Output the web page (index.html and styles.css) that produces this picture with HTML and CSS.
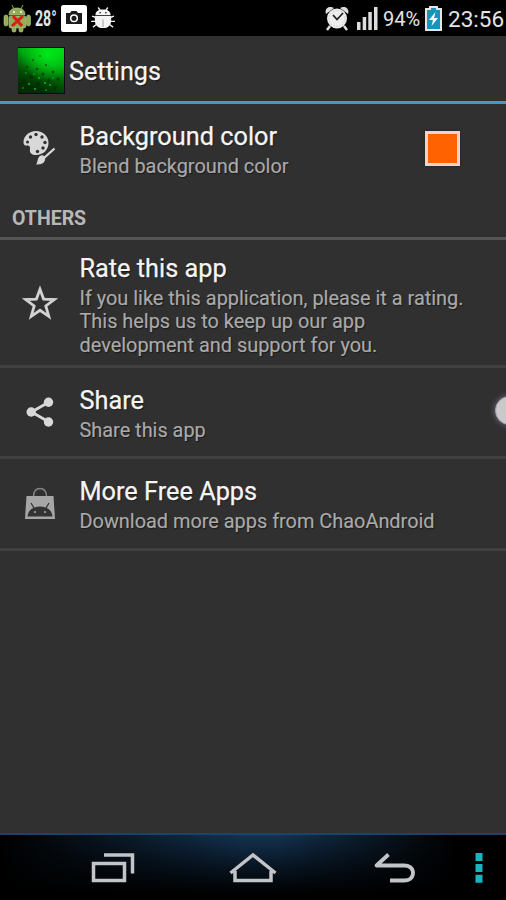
FILE: index.html
```html
<!DOCTYPE html>
<html lang="en">
<head>
<meta charset="utf-8">
<title>Settings</title>
<link rel="stylesheet" href="styles.css">
</head>
<body>
<div class="screen">
  <div class="status">
    <svg class="android" width="28" height="30" viewBox="0 0 28 30">
      <g fill="#91ad58" stroke="#b5c591" stroke-width=".6"><path d="M6 12C6 7 9 5 14 5s8 2 8 7z"/><rect x="6" y="13" width="17" height="12" rx="2"/><rect x="1" y="12" width="4" height="11" rx="2"/><rect x="23.500" y="12" width="4" height="11" rx="2"/><rect x="9" y="24" width="4" height="5" rx="1.5"/><rect x="16" y="24" width="4" height="5" rx="1.5"/></g>
      <path d="M9 2l2 4M20 2l-2 4" stroke="#91ad58"/><circle cx="11" cy="9" r="1" fill="#fff"/><circle cx="18" cy="9" r="1" fill="#fff"/>
      <path d="M10 13l9 10M20 13L9 23" stroke="#d71d16" stroke-width="3"/>
    </svg>
    <span class="temp">28°</span>
    <svg class="camera" width="26" height="27" viewBox="0 0 26 27"><rect width="26" height="27" rx="2.5" fill="#fff"/><path d="M5 8h4l1.500-2h5L17 8h4v11H5z" fill="#1b1b1b"/><circle cx="13" cy="13.200" r="3.300" fill="none" stroke="#fff" stroke-width="1.500"/></svg>
    <svg class="bug" width="24" height="22" viewBox="0 0 25 23"><g fill="#f4f4f4"><path d="M4.500 8.500c0-4 3-6 8-6s8 2 8 6z"/><path d="M4 9.500h17V14c0 5-3 8-8.500 8S4 19 4 14z"/></g><path d="M7.500.5l2 3M17.500.5l-2 3M5 11L1 9.500M5 15H0M6 18l-4 3M20 11l4-1.500M20 15h5M19 18l4 3" stroke="#eee" stroke-width="1.500"/><path d="M12.500 13v8" stroke="#999"/><circle cx="9.500" cy="6" r=".8"/><circle cx="15.500" cy="6" r=".8"/></svg>
    <span class="spacer"></span>
    <svg class="alarm" width="24" height="25" viewBox="0 0 24 25"><path d="M5 20l-3 4M19 20l3 4" stroke="#ddd" stroke-width="2.500"/><path d="M1 8C-1 3 4-1 9 2zM23 8c2-5-3-9-8-6z" fill="#ddd"/><circle cx="12" cy="12.500" r="10" fill="#eee"/><circle cx="12" cy="12.500" r="8" fill="none" stroke="#aaa" stroke-width=".8" stroke-dasharray="1 2"/><path d="M8 9l4 4.500L18 7" fill="none" stroke="#222" stroke-width="1.800"/></svg>
    <svg class="signal" width="21" height="23" viewBox="0 0 21 23" fill="#ddd"><path d="M0 15h3.500v8H0zM5.700 10h3.500v13H5.700zM11.300 5h3.500v18h-3.500zM17 0h3.500v23H17z"/></svg>
    <span class="percent">94%</span>
    <svg class="battery" width="17" height="25" viewBox="0 0 17 25"><path d="M5 1h7v2h4v21H1V3h4z" fill="#1595be" stroke="#e6e6e6" stroke-width="2"/><path d="M10.500 6L4 14h4l-1.500 6L13 12H9z" fill="#fff"/></svg>
    <span class="clock">23:56</span>
  </div>
  <div class="appbar">
    <svg class="appicon" width="47" height="47" viewBox="0 0 47 47">
      <defs><linearGradient id="g" x1="1" y1="0" x2=".6" y2="1"><stop offset="0" stop-color="#00d414"/><stop offset=".4" stop-color="#009e0b"/><stop offset=".75" stop-color="#014f05"/><stop offset="1" stop-color="#002c02"/></linearGradient><radialGradient id="r" cx=".65" cy=".15" r=".6"><stop offset="0" stop-color="#00f51d" stop-opacity=".8"/><stop offset="1" stop-color="#00f51d" stop-opacity="0"/></radialGradient></defs>
      <rect width="47" height="47" fill="#16051b"/><rect y="1" width="46" height="45" fill="url(#g)"/><rect y="1" width="46" height="45" fill="url(#r)"/>
      <g fill="#012c03" opacity=".7"><circle cx="15" cy="13" r="1"/><circle cx="22" cy="9" r=".8"/><circle cx="9" cy="20" r="1.200"/><circle cx="19" cy="22" r="1.300"/><circle cx="28" cy="18" r="1"/><circle cx="25" cy="27" r="1.500"/><circle cx="35" cy="25" r="1.200"/><circle cx="13" cy="30" r="2"/><circle cx="40" cy="32" r="1.500"/><circle cx="31" cy="33" r="1.500"/><circle cx="6" cy="34" r="2"/><circle cx="20" cy="37" r="2"/><circle cx="37" cy="41" r="2"/></g>
      <g fill="#12b82a"><circle cx="8" cy="26" r=".8"/><circle cx="16" cy="27" r=".8"/><circle cx="21" cy="31" r=".9"/><circle cx="11" cy="37" r="1"/><circle cx="27" cy="36" r="1"/><circle cx="32" cy="38" r=".9"/><circle cx="17" cy="42" r="1"/><circle cx="28" cy="43" r=".8"/><circle cx="35" cy="31" r=".8"/><circle cx="5" cy="41" r=".8"/></g>
    </svg>
    <h1>Settings</h1>
  </div>
  <div class="item first">
    <svg class="icon" width="36" height="36" viewBox="0 0 36 36"><path d="M14 1C7 1 1.500 6 1.500 12c0 3 1.500 4 3.500 3.500 2-.5 3.500 1 3 3.500-.8 4 2 6 6 6 7 0 12.500-5 12.500-12S21 1 14 1z" fill="#d8d8d8"/><g fill="#303030"><circle cx="14" cy="4.500" r="1.700"/><circle cx="20" cy="7" r="1.700"/><circle cx="23" cy="12.500" r="1.700"/><circle cx="21" cy="18" r="1.700"/><circle cx="15.500" cy="21.500" r="1.700"/><circle cx="8.500" cy="7" r="1.700"/><circle cx="5.500" cy="12" r="1.500"/></g><path d="M32 18.500L22.500 28" stroke="#303030" stroke-width="5"/><path d="M32.500 18.500L22 28" stroke="#d8d8d8" stroke-width="2.300"/><path d="M18 26c3-2 6 1 5 4-1 4-5 4.500-9 4.500 2-2 1-6.500 4-8.500z" fill="#d8d8d8"/></svg>
    <div class="text"><h2>Background color</h2><p>Blend background color</p></div>
    <span class="swatch"></span>
  </div>
  <h3>OTHERS</h3>
  <div class="item rate">
    <svg class="icon" width="36" height="36" viewBox="0 0 36 36"><path d="M18 4.300l3.600 9.800 10.700.4-8.500 6.500 3 10.300-8.800-6-8.800 6 3-10.300-8.500-6.500 10.700-.4z" fill="none" stroke="#d2d2d2" stroke-width="2.800"/></svg>
    <div class="text"><h2>Rate this app</h2><p>If you like this application, please it a rating.<br>This helps us to keep up our app<br>development and support for you.</p></div>
  </div>
  <div class="item share">
    <svg class="icon" width="36" height="36" viewBox="0 0 36 36"><path d="M27 8L9.500 18 27 28" fill="none" stroke="#d8d8d8" stroke-width="2.800"/><g fill="#d8d8d8"><circle cx="26.500" cy="8.300" r="4.700"/><circle cx="9.200" cy="18" r="4.700"/><circle cx="26.500" cy="28" r="4.700"/></g></svg>
    <div class="text"><h2>Share</h2><p>Share this app</p></div>
    <span class="knob"></span>
  </div>
  <div class="item more">
    <svg class="icon" width="36" height="36" viewBox="0 0 36 36"><path d="M11.500 11C11.500 5 14 2.500 18 2.500S24.500 5 24.500 11" fill="none" stroke="#858585" stroke-width="1.400"/><path d="M4.500 10h27l1.500 23H3z" fill="#a6a6a6"/><path d="M5.500 30.500C6 24 11 20.500 18 20.500S30 24 30.500 30.500z" fill="#333"/><path d="M9 17l3 5M27 17l-3 5" stroke="#333" stroke-width="1.300"/><circle cx="13" cy="26" r="1" fill="#aaa"/><circle cx="23" cy="26" r="1" fill="#aaa"/></svg>
    <div class="text"><h2>More Free Apps</h2><p>Download more apps from ChaoAndroid</p></div>
  </div>
  <div class="nav">
    <svg class="recent" width="44" height="32" viewBox="0 0 44 32"><path d="M13 3h28.500v18.500M2.500 11.500h31v17h-31z" fill="none" stroke="#c2c4c8" stroke-width="3.500"/></svg>
    <svg class="home" width="50" height="32" viewBox="0 0 50 32"><path d="M2.500 21L25 3l22.500 18M7 19v9.500h36V19" fill="none" stroke="#c2c4c8" stroke-width="3.500"/></svg>
    <svg class="back" width="44" height="32" viewBox="0 0 44 32"><path d="M16.500 2.500L4.500 13.500H32c5 0 9 2.500 9 7.500s-4 7.500-9 7.500H18" fill="none" stroke="#c2c4c8" stroke-width="3.800" stroke-linejoin="round"/></svg>
    <svg class="menu" width="8" height="32" viewBox="0 0 8 32"><path d="M.5 1h7v8h-7zM.5 12h7v8h-7zM.5 22.700h7v8h-7z" fill="#17b5bd"/></svg>
  </div>
</div>
</body>
</html>
```
FILE: styles.css
```css
* { box-sizing: border-box; }
body { margin: 0; background: #303030; font-family: Roboto, "Liberation Sans", sans-serif; }
svg { display: block; flex: none; }
h1, h2, h3, p { margin: 0; font-weight: 400; white-space: nowrap; }
.screen { width: 506px; height: 900px; display: flex; flex-direction: column; overflow: hidden; background: #303030; }

.status { flex: none; height: 36px; display: flex; align-items: center; background: #000; color: #e4e4e4; padding: 0 2px 0 3px; white-space: nowrap; }
.temp { width: 22px; margin-left: 4px; font-size: 22px; font-weight: 700; transform: scaleX(.64); transform-origin: left; }
.camera { margin-left: 4px; }
.bug { margin-left: 4px; }
.spacer { flex: 1; }
.alarm { margin-right: 8px; }
.signal { margin-right: 5px; }
.percent { width: 37px; font-size: 20px; }
.battery { margin: 0 6px 0 5px; }
.clock { width: 56px; font-size: 22.5px; line-height: 36px; }
.percent, .clock { padding-top: 1px; }

.appbar { flex: none; height: 68px; display: flex; align-items: center; padding: 0 0 0 18px; border-bottom: 3px solid #3d9cc5; }
.appbar h1 { margin-left: 4px; padding-top: 6px; font-size: 25.2px; color: #f5f5f5; text-shadow: 1px 1px 1px #111; }
.appicon { margin-top: 4px; }
h1, h2 { -webkit-text-stroke: .25px; }
p { -webkit-text-stroke: .15px; }

.item { flex: none; position: relative; display: flex; align-items: center; padding-left: 22px; border-bottom: 3px solid #404040; }
.text { margin-left: 21.5px; padding-top: 2px; text-shadow: 1px 1px 1px #1a1a1a; }
.item h2 { font-size: 25.3px; line-height: 32px; color: #f5f5f5; }
.item p { margin-top: 2px; font-size: 19.9px; line-height: 23.3px; color: #aaa; }
.first { height: 92px; border: 0; padding-bottom: 2px; }
.first .icon { margin-top: -2px; }
.rate { height: 128px; }
.rate .icon { margin-top: 1px; }
.rate .text { padding-top: 5px; }
.share { height: 91px; }
.share .text { padding-top: 3px; }
.more { height: 92px; }
.swatch { width: 35px; height: 35px; margin-left: auto; margin-right: 46px; margin-top: -2px; border: 3px solid #ffd0c5; background: #ff6200; box-shadow: 0 0 2px #10262c; }
h3 { flex: none; height: 44px; padding: 11px 12px 0; font-size: 19.5px; line-height: 23px; color: #b8b8b8; border-bottom: 3px solid #555; }
h3 { font-weight: 700; }
.knob { position: absolute; right: -18px; top: 28px; width: 29px; height: 29px; border-radius: 50%; background: #c9c9c9; border: 1px solid #a29fb2; box-shadow: 0 0 5px 1px #625e6c; }

.nav { height: 67px; flex: none; margin-top: auto; display: flex; align-items: flex-start; padding: 17px 0 0 91px; border-top: 2px solid #1d426f; background: linear-gradient(90deg, #000 0, transparent 48%, transparent 55%, #000 90%), linear-gradient(#153251, #071421 50%, #000 90%); }
.home { margin-left: 93px; }
.back { margin-left: 94px; }
.menu { margin-left: 59px; }
```
